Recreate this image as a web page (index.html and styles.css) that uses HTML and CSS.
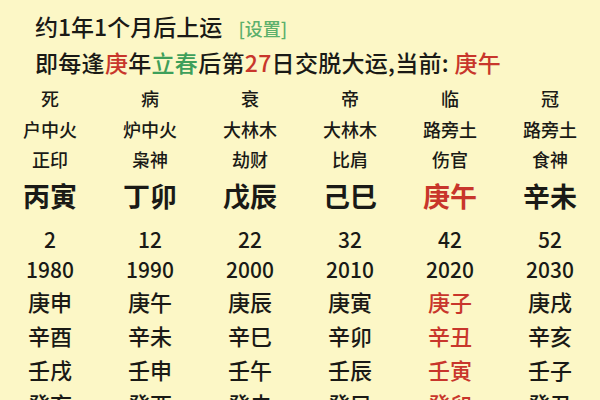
FILE: index.html
```html
<!DOCTYPE html>
<html lang="zh-CN">
<head>
<meta charset="utf-8">
<link rel="stylesheet" href="styles.css">
</head>
<body>
<div class="page">
  <div class="head">
    <div class="line">约1年1个月后上运 <span class="set">[设置]</span></div>
    <div class="line wide">即每逢<span class="red">庚</span>年<span class="green">立春</span>后第<span class="red">27</span>日交脱大运,当前: <span class="red">庚午</span></div>
  </div>
  <div class="grid top">
    <div>死</div><div>病</div><div>衰</div><div>帝</div><div>临</div><div>冠</div>
    <div>户中火</div><div>炉中火</div><div>大林木</div><div>大林木</div><div>路旁土</div><div>路旁土</div>
    <div>正印</div><div>枭神</div><div>劫财</div><div>比肩</div><div>伤官</div><div>食神</div>
  </div>
  <div class="grid pillars">
    <div>丙寅</div><div>丁卯</div><div>戊辰</div><div>己巳</div><div class="red">庚午</div><div>辛未</div>
  </div>
  <div class="grid nums">
    <div>2</div><div>12</div><div>22</div><div>32</div><div>42</div><div>52</div>
    <div>1980</div><div>1990</div><div>2000</div><div>2010</div><div>2020</div><div>2030</div>
  </div>
  <div class="grid years">
    <div>庚申</div><div>庚午</div><div>庚辰</div><div>庚寅</div><div class="red">庚子</div><div>庚戌</div>
    <div>辛酉</div><div>辛未</div><div>辛巳</div><div>辛卯</div><div class="red">辛丑</div><div>辛亥</div>
    <div>壬戌</div><div>壬申</div><div>壬午</div><div>壬辰</div><div class="red">壬寅</div><div>壬子</div>
    <div>癸亥</div><div>癸酉</div><div>癸未</div><div>癸巳</div><div class="red">癸卯</div><div>癸丑</div>
  </div>
</div>
</body>
</html>
```
FILE: styles.css
```css
html, body {
  margin: 0;
  padding: 0;
  background: #fcf7c6;
}
body {
  width: 600px;
  height: 400px;
  overflow: hidden;
  font-family: "Noto Sans CJK SC", "Noto Sans", sans-serif;
  font-weight: 500;
  color: #1a1a16;
}
.page {
  padding-top: 9px;
}
.head {
  padding-left: 35px;
  font-size: 23px;
  line-height: 34px;
}
.line {
  white-space: nowrap;
}
.wide {
  letter-spacing: 0.3px;
}
.set {
  font-size: 18px;
  color: #5cb06c;
  margin-left: 11px;
}
.red {
  color: #c8362b;
}
.green {
  color: #3e9f5a;
}
.grid {
  display: grid;
  grid-template-columns: repeat(6, 100px);
  text-align: center;
}
.top {
  margin-top: 4px;
  font-size: 18px;
  line-height: 30.5px;
}
.pillars {
  font-size: 27px;
  font-weight: bold;
  line-height: 42px;
  margin-bottom: 2px;
}
.nums {
  font-size: 21px;
  line-height: 30px;
  padding-top: 5px;
}
.years {
  font-size: 22px;
  line-height: 34px;
}
```
